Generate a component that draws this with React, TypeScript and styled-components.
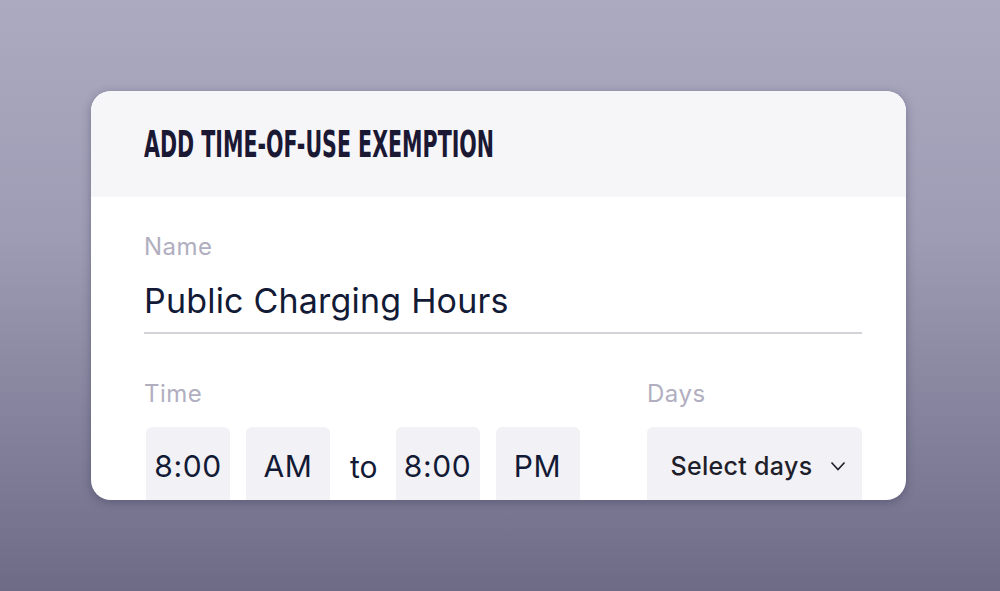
import React from "react";
import styled, { createGlobalStyle } from "styled-components";

const GlobalStyle = createGlobalStyle`
    html, body {
        margin: 0;
        padding: 0;
        height: 100%;
    }
    body {
        background: linear-gradient(180deg, #acaac1 0%, #9e9cb4 40%, #6d6b86 100%);
        font-family: "Inter", "Noto Sans", sans-serif;
        overflow: hidden;
    }
`;

const Page = styled.div`
    width: 1000px;
    height: 591px;
    padding: 91px 0 0 91px;
    box-sizing: border-box;
`;

const Card = styled.div`
    width: 815px;
    height: 409px;
    background: #ffffff;
    border-radius: 20px;
    overflow: hidden;
    box-shadow: 0 2px 10px rgba(38, 36, 66, 0.35);
    display: flex;
    flex-direction: column;
`;

const CardHeader = styled.div`
    height: 106px;
    flex-shrink: 0;
    background: #f6f5f8;
    display: flex;
    align-items: center;
    padding-left: 53px;
`;

const Title = styled.h1`
    margin: 0;
    font-family: "Liberation Sans Narrow", "DejaVu Sans Condensed", sans-serif;
    font-weight: 700;
    font-size: 37px;
    white-space: nowrap;
    color: #1b1834;
    transform: scaleX(0.618);
    transform-origin: left center;
`;

const CardBody = styled.div`
    padding: 35px 44px 0 53px;
    display: flex;
    flex-direction: column;
`;

const Label = styled.div`
    font-size: 24px;
    line-height: 30px;
    letter-spacing: 0.5px;
    color: #b1aec0;
`;

const NameInput = styled.div`
    margin-top: 20px;
    padding-bottom: 12px;
    font-size: 34px;
    line-height: 38px;
    letter-spacing: 0.2px;
    color: #131a36;
    border-bottom: 2px solid #d3d2d9;
`;

const Row = styled.div`
    margin-top: 45px;
    display: flex;
    justify-content: space-between;
`;

const Field = styled.div`
    display: flex;
    flex-direction: column;
`;

const Controls = styled.div<{ $inset?: number }>`
    margin-top: 18px;
    margin-left: ${({ $inset = 0 }) => $inset}px;
    display: flex;
    align-items: center;
    gap: 16px;
`;

const Box = styled.div<{ $width: number; $shift?: number }>`
    width: ${({ $width }) => $width}px;
    height: 80px;
    padding: 0 0 2px ${({ $shift = 0 }) => $shift}px;
    box-sizing: border-box;
    background: #f2f1f5;
    border-radius: 6px;
    display: flex;
    align-items: center;
    justify-content: center;
    gap: 18px;
    font-size: 30px;
    letter-spacing: 0.6px;
    color: #131a36;
`;

const Joiner = styled.span`
    font-size: 30px;
    color: #131a36;
    padding: 0 2px 0 4px;
`;

const SelectText = styled.span`
    font-weight: 500;
    font-size: 25px;
    letter-spacing: 0.3px;
    color: #1f1f2b;
`;

export default function App() {
    return (
        <>
            <GlobalStyle />
            <Page>
                <Card>
                    <CardHeader>
                        <Title>ADD TIME-OF-USE EXEMPTION</Title>
                    </CardHeader>
                    <CardBody>
                        <Label>Name</Label>
                        <NameInput>Public Charging Hours</NameInput>
                        <Row>
                            <Field>
                                <Label>Time</Label>
                                <Controls $inset={2}>
                                    <Box $width={84}>8:00</Box>
                                    <Box $width={84}>AM</Box>
                                    <Joiner>to</Joiner>
                                    <Box $width={84}>8:00</Box>
                                    <Box $width={84}>PM</Box>
                                </Controls>
                            </Field>
                            <Field>
                                <Label>Days</Label>
                                <Controls>
                                    <Box $width={215} $shift={8}>
                                        <SelectText>Select days</SelectText>
                                        <svg width="16" height="10" viewBox="0 0 16 10" fill="none">
                                            <path d="M1.5 1.5 L8 8.5 L14.5 1.5" stroke="#1f1f2b" strokeWidth="1.6" />
                                        </svg>
                                    </Box>
                                </Controls>
                            </Field>
                        </Row>
                    </CardBody>
                </Card>
            </Page>
        </>
    );
}
